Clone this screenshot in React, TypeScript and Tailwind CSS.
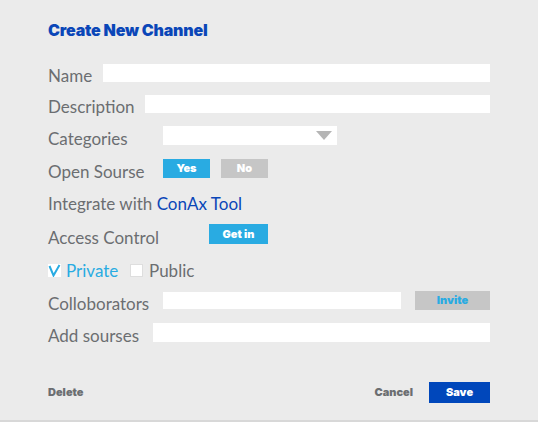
import React from "react";

const font = { fontFamily: "Lato, 'Open Sans', Arial, sans-serif" };
const heavy = { fontFamily: "Inter, 'Open Sans', Arial, sans-serif" };

function Label({ w, children }: { w: string; children: React.ReactNode }) {
  return (
    <span className={`${w} shrink-0 text-[17px] leading-[17px] -mb-[2px] text-[#6b6e71] whitespace-nowrap`}>
      {children}
    </span>
  );
}

export default function App() {
  return (
    <div
      style={font}
      className="w-[538px] h-[422px] bg-[#ebebeb] border-b-2 border-[#d8d8d8] px-[48px] flex flex-col"
    >
      <div style={heavy} className="pt-[20px] text-[16px] leading-[20px] font-black text-[#0a46b8] tracking-[-0.2px]">
        Create New Channel
      </div>

      {/* Name */}
      <div className="mt-[24px] flex items-end">
        <Label w="w-[55px]">Name</Label>
        <div className="flex-1 h-[18px] bg-white" />
      </div>

      {/* Description */}
      <div className="mt-[13px] flex items-end">
        <Label w="w-[97px]">Description</Label>
        <div className="flex-1 h-[18px] bg-white" />
      </div>

      {/* Categories */}
      <div className="mt-[13px] flex items-end">
        <Label w="w-[115px]">Categories</Label>
        <div className="w-[174px] h-[19px] bg-white flex items-center justify-end pr-[5px]">
          <svg width="16" height="9" viewBox="0 0 16 9">
            <polygon points="0,0 16,0 8,9" fill="#b5b5b5" />
          </svg>
        </div>
      </div>

      {/* Open Sourse */}
      <div className="mt-[14px] flex items-end">
        <Label w="w-[115px]">Open Sourse</Label>
        <div style={heavy} className="flex gap-[11px]">
          <div className="w-[47px] h-[19px] bg-[#29abe2] text-white text-[11px] font-black flex items-center justify-center">
            Yes
          </div>
          <div className="w-[47px] h-[19px] bg-[#c6c6c6] text-white text-[11px] font-black flex items-center justify-center">
            No
          </div>
        </div>
      </div>

      {/* Integrate */}
      <div className="mt-[17px] flex items-end">
        <Label w="">
          Integrate with <span className="text-[#0a46b8]">ConAx Tool</span>
        </Label>
      </div>

      {/* Access Control */}
      <div className="mt-[14px] flex items-end">
        <Label w="w-[161px]">Access Control</Label>
        <div style={heavy} className="w-[59px] h-[20px] bg-[#29abe2] text-white text-[11px] font-black flex items-center justify-center">
          Get in
        </div>
      </div>

      {/* Private / Public */}
      <div className="mt-[18px] flex items-end">
        <div className="w-[13px] h-[13px] bg-white flex items-center justify-center">
          <svg width="13" height="13" viewBox="0 0 13 13">
            <polyline points="1.5,2 5.5,11.5 11.5,1" fill="none" stroke="#29abe2" strokeWidth="2" />
          </svg>
        </div>
        <span className="ml-[5px] w-[64px] text-[17px] leading-[17px] -mb-[2px] text-[#29abe2]">Private</span>
        <div className="w-[13px] h-[13px] bg-white border border-[#dedede]" />
        <span className="ml-[6px] text-[17px] leading-[17px] -mb-[2px] text-[#6b6e71]">Public</span>
      </div>

      {/* Collaborators */}
      <div className="mt-[14px] flex items-end">
        <Label w="w-[115px]">Colloborators</Label>
        <div className="w-[238px] h-[17px] mb-[1px] bg-white" />
        <div style={heavy} className="ml-[14px] flex-1 h-[19px] bg-[#c6c6c6] text-[#29abe2] text-[11px] font-black flex items-center justify-center">
          Invite
        </div>
      </div>

      {/* Add sourses */}
      <div className="mt-[13px] flex items-end">
        <Label w="w-[105px]">Add sourses</Label>
        <div className="flex-1 h-[19px] bg-white" />
      </div>

      {/* Footer */}
      <div style={heavy} className="mt-[40px] flex items-center">
        <span className="flex-1 text-[11px] font-black text-[#6b6e71]">Delete</span>
        <span className="text-[11px] font-black text-[#6b6e71]">Cancel</span>
        <div className="ml-[16px] w-[61px] h-[21px] bg-[#0047bb] text-white text-[11px] font-black flex items-center justify-center">
          Save
        </div>
      </div>
    </div>
  );
}
